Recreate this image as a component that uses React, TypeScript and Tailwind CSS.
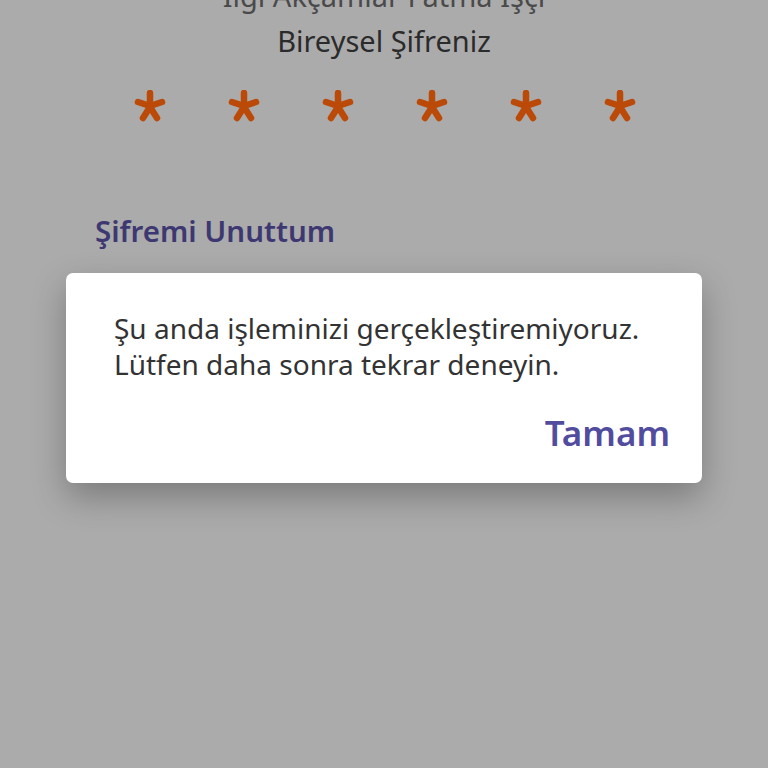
import React from "react";

export default function App() {
  const stars = [0, 1, 2, 3, 4, 5];
  return (
    <div
      className="w-[768px] h-[768px] overflow-hidden bg-[#ababab] flex flex-col"
      style={{ fontFamily: '"Noto Sans", "Open Sans", sans-serif' }}
    >
      <div className="mt-[-21px] h-[34px] text-center text-[29px] leading-[34px] text-[#4a4a4a]">
        İlgi Akçamlar Fatma İşçi
      </div>
      <div className="mt-[11px] h-[34px] text-center text-[29px] leading-[34px] text-[#2b2b2b]">
        Bireysel Şifreniz
      </div>
      <div className="mt-[28px] flex justify-center gap-[62px] pl-[2px]">
        {stars.map((i) => (
          <div
            key={i}
            className="w-[32px] h-[40px] flex items-center justify-center"
          >
            <svg width="32" height="32" viewBox="0 0 32 32">
              <g stroke="#bb4a08" strokeWidth="6.5" strokeLinecap="round">
                <line x1="16" y1="3" x2="16" y2="15" />
                <line x1="4" y1="12" x2="16" y2="16" />
                <line x1="28" y1="12" x2="16" y2="16" />
                <line x1="9" y1="28" x2="16" y2="17" />
                <line x1="23" y1="28" x2="16" y2="17" />
              </g>
            </svg>
          </div>
        ))}
      </div>
      <div className="mt-[87px] ml-[95px] h-[36px] text-[29.5px] leading-[36px] font-semibold text-[#3e3872]">
        Şifremi Unuttum
      </div>
      <div className="mt-[24px] mx-[66px] h-[210px] bg-white rounded-[7px] shadow-[0_14px_34px_rgba(0,0,0,0.28)] flex flex-col">
        <div className="mt-[37px] ml-[48px] text-[28px] leading-[36px] text-[#333333]">
          <div>Şu anda işleminizi gerçekleştiremiyoruz.</div>
          <div>Lütfen daha sonra tekrar deneyin.</div>
        </div>
        <div className="mt-[31px] mr-[32px] self-end text-[35px] leading-[40px] font-semibold text-[#524c9e]">
          Tamam
        </div>
      </div>
    </div>
  );
}
